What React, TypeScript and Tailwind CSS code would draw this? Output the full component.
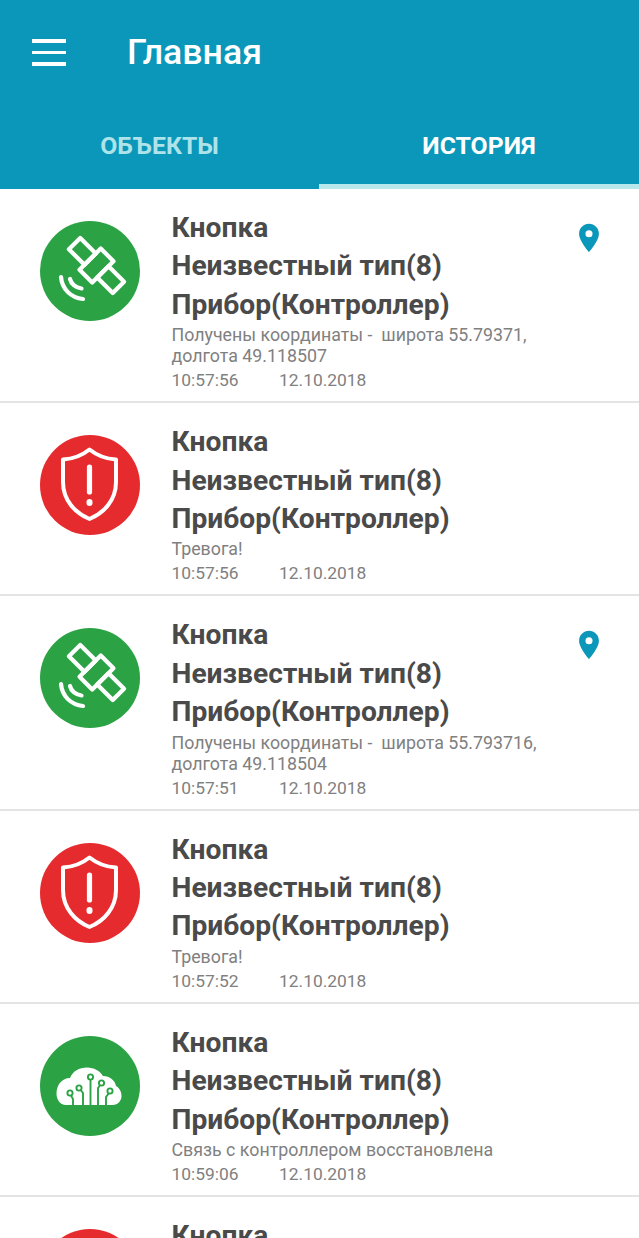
import React from "react";

type Kind = "sat" | "alarm" | "cloud";

const SatelliteIcon = () => (
  <svg viewBox="0 0 100 100" className="w-full h-full" fill="none" stroke="#fff" strokeWidth="4.2" strokeLinejoin="round" strokeLinecap="round">
    <g transform="translate(56.5 44.5) rotate(45)">
      <rect x="-9" y="-15" width="18" height="30" />
      <rect x="-31" y="-8" width="22" height="16" />
      <rect x="9" y="-8" width="22" height="16" />
    </g>
    <path d="M21 56C22 68 31 77 43 78" />
    <path d="M30 58C31 63 36 67 41.5 67.5" />
  </svg>
);

const ShieldIcon = () => (
  <svg viewBox="0 0 100 100" className="w-full h-full" fill="none" stroke="#fff" strokeLinecap="round">
    <path strokeWidth="4" strokeLinejoin="round" d="M49.5 14.5C42 20.5 32 24 23 24.5V47C23 65 35 78 49.5 84C64 78 76 65 76 47V24.5C67 24 57 20.5 49.5 14.5Z" />
    <path strokeWidth="5.2" d="M49.5 32V57" />
    <path strokeWidth="6" d="M49.5 67V68" />
  </svg>
);

const CloudIcon = () => (
  <svg viewBox="0 0 100 100" className="w-full h-full">
    <path fill="#fff" d="M26 69C20 69 16.5 63.5 16.5 57.5C16.5 49 22 42 30 42C33 35 39 31.5 47 31.5C54 31.5 60 35 63 40C70 40 75 44.5 76 50C79.5 52 81.5 56 81.5 60C81.5 65 77.5 69 73 69Z" />
    <g fill="none" stroke="#2ba345" strokeWidth="1.9">
      <path d="M33 69V63L30 58" />
      <path d="M43 69V57L40 53" />
      <path d="M50.5 69V43" />
      <path d="M58 69V52L61 48" />
      <path d="M66 69V61L69 57" />
    </g>
    <g fill="#fff" stroke="#2ba345" strokeWidth="1.9">
      <circle cx="30" cy="57" r="2.6" />
      <circle cx="39" cy="52" r="2.6" />
      <circle cx="50.5" cy="41" r="2.6" />
      <circle cx="61.5" cy="47" r="2.6" />
      <circle cx="70" cy="55" r="2.6" />
    </g>
  </svg>
);

const Pin = () => (
  <svg viewBox="0 0 24 24" className="w-[34px] h-[34px] shrink-0 ml-auto" fill="#0a97b9">
    <path fillRule="evenodd" d="M12 2C8.13 2 5 5.13 5 9c0 5.25 7 13 7 13s7-7.75 7-13c0-3.87-3.13-7-7-7zm0 9.5a2.5 2.5 0 010-5 2.5 2.5 0 010 5z" />
  </svg>
);

const events: { kind: Kind; text: string[]; time: string; pin?: boolean }[] = [
  { kind: "sat", text: ["Получены координаты -  широта 55.79371,", "долгота 49.118507"], time: "10:57:56", pin: true },
  { kind: "alarm", text: ["Тревога!"], time: "10:57:56" },
  { kind: "sat", text: ["Получены координаты -  широта 55.793716,", "долгота 49.118504"], time: "10:57:51", pin: true },
  { kind: "alarm", text: ["Тревога!"], time: "10:57:52" },
  { kind: "cloud", text: ["Связь с контроллером восстановлена"], time: "10:59:06" },
  { kind: "alarm", text: ["Тревога!"], time: "10:59:06" },
];

const EventRow = ({ kind, text, time, pin }: (typeof events)[number]) => (
  <div className="flex items-start pl-10 pr-[33px] pt-[20px] border-b-2 border-[#e4e4e4] pb-[8px]">
    <div className={`w-[100px] h-[100px] mt-[12px] rounded-full shrink-0 ${kind === "alarm" ? "bg-[#e62b2e]" : "bg-[#2ba345]"}`}>
      {kind === "sat" && <SatelliteIcon />}
      {kind === "alarm" && <ShieldIcon />}
      {kind === "cloud" && <CloudIcon />}
    </div>
    <div className="ml-[31.5px] min-w-0">
      <div className="text-[28.2px] leading-[38.4px] font-bold text-[#4a4a4a] whitespace-nowrap">
        <div>Кнопка</div>
        <div>Неизвестный тип(8)</div>
        <div>Прибор(Контроллер)</div>
      </div>
      <div className="text-[17.8px] leading-[21px] text-[#808080] whitespace-pre">
        {text.map((t) => (
          <div key={t}>{t}</div>
        ))}
      </div>
      <div className="flex text-[17.4px] leading-[25px] text-[#808080] mt-[2px]">
        <span className="w-[107.5px]">{time}</span>
        <span>12.10.2018</span>
      </div>
    </div>
    {pin && (
      <div className="ml-auto mt-[12px]">
        <Pin />
      </div>
    )}
  </div>
);

export default function App() {
  return (
    <div className="w-[639px] h-[1238px] overflow-hidden bg-white font-['Roboto',sans-serif]">
      <div className="h-[189px] bg-[#0a97b9] flex flex-col">
        <div className="flex items-center h-[105px] pl-8">
          <div className="w-[34px] flex flex-col gap-[8px]">
            <div className="h-[3.5px] bg-white" />
            <div className="h-[3.5px] bg-white" />
            <div className="h-[3.5px] bg-white" />
          </div>
          <h1 className="ml-[61px] text-[35.7px] font-medium text-white">Главная</h1>
        </div>
        <div className="flex flex-1">
          <div className="w-[319px] flex justify-center pt-[22px] text-[24.8px] font-bold text-[#aee3ea]">ОБЪЕКТЫ</div>
          <div className="w-[320px] flex justify-center pt-[22px] text-[24.8px] font-bold text-white border-b-[5px] border-[#b8e8ec]">ИСТОРИЯ</div>
        </div>
      </div>
      {events.map((e, i) => (
        <EventRow key={i} {...e} />
      ))}
    </div>
  );
}
